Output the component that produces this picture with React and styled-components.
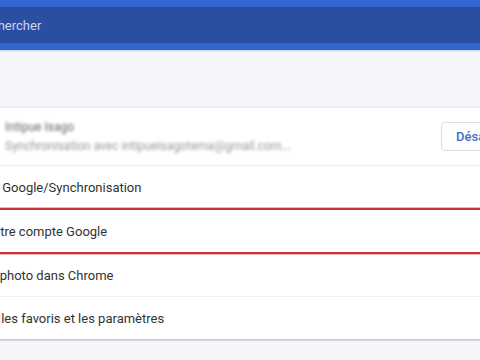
import React from 'react';
import styled, { createGlobalStyle } from 'styled-components';

const GlobalStyle = createGlobalStyle`
  html, body {
    margin: 0;
    padding: 0;
    width: 480px;
    height: 360px;
    overflow: hidden;
    background: #f4f6fa;
    font-family: Roboto, "Liberation Sans", Arial, sans-serif;
  }
`;

const Page = styled.div`
  width: 600px;
  margin-left: -54px;
  height: 360px;
  background: #f4f6fa;
`;

const Header = styled.header`
  height: 50px;
  background: #3465d2;
  padding: 7px 0;
  box-sizing: border-box;
  box-shadow: 0 1px 2px rgba(40, 70, 150, 0.25);
`;

const SearchBox = styled.div`
  height: 36px;
  background: #2a4fa1;
  display: flex;
  align-items: center;
  padding-left: 30px;
  border-radius: 4px 0 0 4px;
`;

const SearchText = styled.span`
  color: #c9d4ec;
  font-size: 13px;
`;

const Card = styled.section`
  margin-top: 57px;
  background: #fff;
  border-top: 1px solid #ececec;
  box-shadow: 0 1px 2px rgba(0, 0, 0, 0.18), 0 2px 1px rgba(0, 0, 0, 0.06);
`;

const Account = styled.div`
  height: 57px;
  display: flex;
  align-items: center;
  padding-left: 59px;
  border-bottom: 1px solid #eeeeee;
`;

const AccountText = styled.div`
  display: flex;
  flex-direction: column;
  gap: 5px;
  filter: blur(1.4px);
`;

const AccountName = styled.span`
  font-size: 12px;
  color: #666;
`;

const AccountMail = styled.span`
  font-size: 12px;
  color: #999;
`;

const Button = styled.button`
  height: 29px;
  width: 108px;
  padding: 0 0 0 14px;
  margin-left: auto;
  margin-right: -3px;
  border: 1px solid #dadce0;
  border-radius: 4px;
  background: #fff;
  color: #3d6fc4;
  font-family: inherit;
  font-size: 13px;
  font-weight: 500;
  text-align: left;
`;

const Row = styled.div`
  height: ${(p) => p.$h}px;
  display: flex;
  align-items: center;
  padding-left: ${(p) => p.$indent}px;
  font-size: 13px;
  color: #333;
  border-top: ${(p) => (p.$mark ? '2px solid #c9313d' : 'none')};
  border-bottom: ${(p) =>
    p.$mark ? '2px solid #c9313d' : p.$line ? '1px solid #efefef' : 'none'};
  box-shadow: ${(p) =>
    p.$mark ? '0 -1px 0 #f1b6bb, 0 1px 0 #f1b6bb' : 'none'};
`;

export default function App() {
  return (
    <>
      <GlobalStyle />
      <Page>
        <Header>
          <SearchBox>
            <SearchText>Rechercher</SearchText>
          </SearchBox>
        </Header>
        <Card>
          <Account>
            <AccountText>
              <AccountName>Intipue Isago</AccountName>
              <AccountMail>Synchronisation avec intipueisagotema@gmail.com...</AccountMail>
            </AccountText>
            <Button>Désactiver</Button>
          </Account>
          <Row $h={42} $indent={4}>Services Google/Synchronisation</Row>
          <Row $h={42} $indent={6} $mark>Gérer votre compte Google</Row>
          <Row $h={42} $indent={8} $line>Nom et photo dans Chrome</Row>
          <Row $h={42} $indent={2}>Importer les favoris et les paramètres</Row>
        </Card>
      </Page>
    </>
  );
}
